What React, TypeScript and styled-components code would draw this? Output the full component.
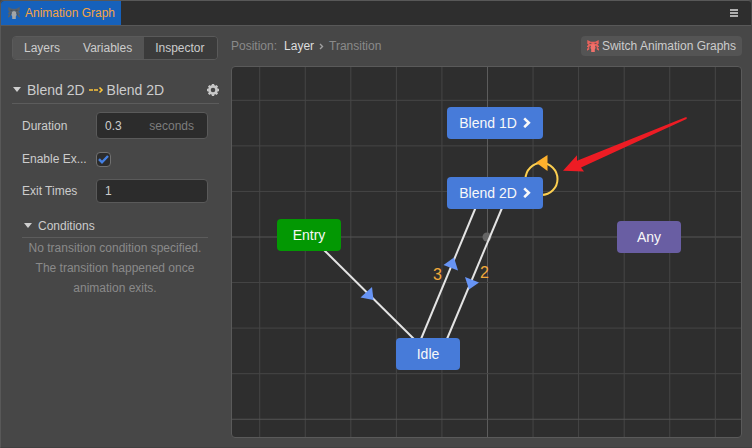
import React from "react";
import styled, { createGlobalStyle } from "styled-components";

const Global = createGlobalStyle`
  * { box-sizing: border-box; }
  html, body, #root { height: 100%; margin: 0; }
  body {
    background: #474747;
    color: #cccccc;
    font: 12px/16px "Liberation Sans", Arial, sans-serif;
  }
  button, input { font: inherit; color: inherit; }
`;

const Panel = styled.div`
  min-height: 100%;
  display: flex;
  flex-direction: column;
  background: #474747;
  border: 1px solid #585858;
  border-right-color: #474747;
  border-bottom-color: #404040;
  border-radius: 4px 4px 0 0;
  overflow: hidden;
`;

const TitleBar = styled.header`
  display: flex;
  align-items: stretch;
  justify-content: space-between;
  height: 25px;
  background: #2e2e2e;
  border-bottom: 1px solid #585858;
`;

const PanelTab = styled.button`
  display: flex;
  align-items: center;
  gap: 5px;
  padding: 0 6px 0 7px;
  border: 0;
  background: #1661bb;
  color: #f5a344;
`;

const MenuButton = styled.button`
  display: flex;
  align-items: center;
  padding: 0 13px;
  border: 0;
  background: none;
  color: #b0b0b0;
`;

const Content = styled.div`
  flex: 1;
  display: flex;
`;

const Sidebar = styled.aside`
  flex: none;
  width: 230px;
  padding: 10px 12px 10px 11px;
`;

const Tabs = styled.div`
  display: flex;
  width: max-content;
  height: 24px;
  border: 1px solid #5a5a5a;
  border-radius: 4px;
  overflow: hidden;
`;

const TabButton = styled.button<{ $active?: boolean }>`
  border: 0;
  padding: 0 12px 0 11px;
  background: ${(p) => (p.$active ? "#3b3b3b" : "#545454")};
`;

const SectionHeader = styled.div`
  display: flex;
  align-items: center;
  gap: 6px;
  height: 28px;
  margin-top: 16px;
  padding-left: 1px;
  border-bottom: 1px solid #5c5c5c;
  font-size: 14px;
`;

const SectionTitle = styled.h2`
  flex: 1;
  display: flex;
  align-items: center;
  gap: 3px;
  margin: 0;
  font: inherit;
`;

const IconButton = styled.button`
  display: flex;
  padding: 0;
  border: 0;
  background: none;
  color: #c8c8c8;
`;

const Fields = styled.div`
  padding: 8px 11px 0 10px;
`;

const Field = styled.div<{ $gap: number }>`
  display: flex;
  align-items: center;
  margin-bottom: ${(p) => p.$gap}px;
`;

const Label = styled.label`
  width: 74px;
  padding-right: 4px;
  overflow: hidden;
  text-overflow: ellipsis;
  white-space: nowrap;
`;

const InputBox = styled.div<{ $tall?: boolean }>`
  flex: 1;
  min-width: 0;
  display: flex;
  align-items: center;
  height: ${(p) => (p.$tall ? 27 : 24)}px;
  padding: 0 13px 0 8px;
  background: #2c2c2c;
  border: 1px solid #5a5a5a;
  border-radius: 4px;
`;

const TextInput = styled.input`
  flex: 1;
  min-width: 0;
  width: 20px;
  padding: 0;
  border: 0;
  outline: 0;
  background: none;
`;

const Unit = styled.span`
  color: #7d7d7d;
`;

const CheckWrap = styled.span`
  display: grid;
  > * { grid-area: 1 / 1; }
  > svg { pointer-events: none; }
`;

const Checkbox = styled.input`
  appearance: none;
  width: 15px;
  height: 15px;
  margin: 0;
  background: #2c2c2c;
  border: 1px solid #707070;
  border-radius: 4px;
  & + svg { visibility: hidden; }
  &:checked + svg { visibility: visible; }
`;

const SubHeader = styled.div`
  display: flex;
  align-items: center;
  gap: 6px;
  height: 26px;
  padding: 2px 0 0 2px;
  border-bottom: 1px solid #5c5c5c;
`;

const SubTitle = styled.h3`
  margin: 0;
  font: inherit;
`;

const Hint = styled.p`
  margin: 0;
  line-height: 20px;
  text-align: center;
  color: #8a8a8a;
`;

const Main = styled.main`
  flex: 1;
  min-width: 0;
  display: flex;
  flex-direction: column;
  gap: 10px;
  padding: 10px 9px 9px 0;
`;

const Toolbar = styled.div`
  display: flex;
  align-items: center;
  justify-content: space-between;
  height: 20px;
`;

const Breadcrumb = styled.nav`
  display: flex;
  align-items: center;
  gap: 4px;
  color: #8a8a8a;
`;

const Crumb = styled.a`
  margin-left: 3px;
  color: #dedede;
  text-decoration: none;
`;

const SwitchButton = styled.button`
  display: flex;
  align-items: center;
  gap: 3px;
  height: 20px;
  padding: 0 6px;
  border: 0;
  border-radius: 4px;
  background: #545454;
`;

const Canvas = styled.section`
  position: relative;
  flex: 1;
  min-height: 320px;
  background: #2e2e2e;
  border: 1px solid #5a5a5a;
  border-radius: 4px;
  overflow: hidden;
`;

const Drawing = styled.svg`
  position: absolute;
  inset: 0;
  width: 100%;
  height: 100%;
  pointer-events: none;
`;

const Node = styled.button<{ $x: number; $y: number; $color: string; $wide?: boolean }>`
  position: absolute;
  left: ${(p) => p.$x}px;
  top: ${(p) => p.$y}px;
  display: flex;
  align-items: center;
  justify-content: center;
  gap: 6px;
  width: ${(p) => (p.$wide ? 96 : 64)}px;
  height: 32px;
  padding: 0 0 1px;
  border: 0;
  border-radius: 4px;
  background: ${(p) => p.$color};
  color: #f8f8f8;
  font-size: 14px;
`;

const Priority = styled.text`
  fill: #f2a93b;
  font-size: 16px;
`;

const GRID = 45.56;
const ORIGIN = { x: 255.5, y: 170 };

const GraphIcon = ({ main, body }: { main: string; body: string }) => (
  <svg width="12" height="12" viewBox="0 0 12 12" aria-hidden="true">
    <path
      d="M0.3 0L3.8 1.7H8.2L11.7 0V3.8L10.4 4.8L12 6V7L10.6 7.2L12 9V10.8L9.8 9.6L8.8 6H3.2L2.2 9.6L0 10.8V9L1.4 7.2L0 7V6L1.6 4.8L0.3 3.8Z"
      fill={main}
    />
    <path d="M4.2 4.8L6 4L7.8 4.8L8.8 7.5L7.8 9.4V12H4.2V9.4L3.2 7.5Z" fill={body} />
    <path d="M2.4 3.4H4.4M7.6 3.4H9.6M3.2 5.8L2.6 8.4M8.8 5.8L9.4 8.4" stroke="#4b4b4b" strokeWidth="0.8" fill="none" />
  </svg>
);

const Caret = () => (
  <svg width="8" height="5" viewBox="0 0 8 5" aria-hidden="true">
    <path d="M0 0H8L4 5Z" fill="#cfcfcf" />
  </svg>
);

const Chevron = () => (
  <svg width="8" height="11" viewBox="0 0 8 11" aria-hidden="true">
    <path d="M1.2 1.4L5.8 5.8L1.2 10.2" stroke="#f8f8f8" strokeWidth="2.6" fill="none" />
  </svg>
);

const Gear = () => (
  <svg width="12" height="12" viewBox="0 0 12 12" aria-hidden="true">
    <circle cx="6" cy="6" r="3.6" fill="none" stroke="currentColor" strokeWidth="2.6" />
    {[0, 45, 90, 135].map((a) => (
      <path key={a} d="M4.8 0H7.2V1.8H4.8ZM4.8 10.2H7.2V12H4.8Z" fill="currentColor" transform={`rotate(${a} 6 6)`} />
    ))}
  </svg>
);

const steps = Array.from({ length: 81 }, (_, i) => i - 40);

const Grid = () => (
  <Drawing aria-hidden="true">
    {steps.map((i) => {
      const x = ORIGIN.x + i * GRID;
      const y = ORIGIN.y + i * GRID;
      return (
        <g key={i} stroke={i % 4 === 0 ? "#545454" : "#464646"}>
          <line x1={x} x2={x} y1="0" y2="100%" stroke={i === 0 ? "#5c5c5c" : "#464646"} />
          <line y1={y} y2={y} x1="0" x2="100%" />
        </g>
      );
    })}
    <circle cx="255" cy="170" r="4.5" fill="#656565" />
  </Drawing>
);

const Links = () => (
  <Drawing aria-hidden="true">
    <g stroke="#e4e4e4" strokeWidth="2">
      <line x1="92" y1="183" x2="182" y2="272" />
      <line x1="243.5" y1="141" x2="189" y2="272" />
      <line x1="270" y1="141" x2="215" y2="272" />
    </g>
    <g fill="#6794f5">
      <path d="M140 220L128.5 230.5L141.5 233Z" />
      <path d="M222 190.5L211.5 198L226 203.5Z" />
      <path d="M233 210L247 215.5L237 222.5Z" />
    </g>
    <circle cx="309.5" cy="112" r="16" fill="none" stroke="#fccf50" strokeWidth="2" />
    <path d="M304 95.5L315.5 88V104Z" fill="#fdb02c" />
    <Priority x="201" y="213">3</Priority>
    <Priority x="248" y="211">2</Priority>
  </Drawing>
);

const Pointer = () => (
  <Drawing aria-hidden="true">
    <path d="M331 103.700L345 88.200V93.700L453.500 50.200L455 50.500L454.500 52L349 100.500L352 104.500Z" fill="#ed1c24" />
  </Drawing>
);

export default function App() {
  return (
    <>
      <Global />
      <Panel>
        <TitleBar>
          <PanelTab>
            <GraphIcon main="#56616d" body="#a3a6a8" />
            <span>Animation Graph</span>
          </PanelTab>
          <MenuButton aria-label="Panel menu">
            <svg width="8" height="8" viewBox="0 0 8 8">
              <path d="M0 1H8M0 4H8M0 7H8" stroke="currentColor" strokeWidth="2" />
            </svg>
          </MenuButton>
        </TitleBar>
        <Content>
          <Sidebar>
            <Tabs role="tablist">
              <TabButton role="tab">Layers</TabButton>
              <TabButton role="tab">Variables</TabButton>
              <TabButton role="tab" aria-selected $active>Inspector</TabButton>
            </Tabs>
            <SectionHeader>
              <Caret />
              <SectionTitle>
                Blend 2D
                <svg width="16" height="9" viewBox="0 0 16 9" role="img" aria-label="to">
                  <path d="M1 5H5M6 5H10" stroke="#fbc53c" strokeWidth="1.4" />
                  <path d="M11.500 2.500L14 5L11.500 7.500" stroke="#fbc53c" strokeWidth="1.600" fill="none" />
                </svg>
                Blend 2D
              </SectionTitle>
              <IconButton aria-label="Settings"><Gear /></IconButton>
            </SectionHeader>
            <Fields>
              <Field $gap={12}>
                <Label htmlFor="duration">Duration</Label>
                <InputBox $tall>
                  <TextInput id="duration" defaultValue="0.3" />
                  <Unit>seconds</Unit>
                </InputBox>
              </Field>
              <Field $gap={12}>
                <Label htmlFor="exit-enabled">Enable Ex...</Label>
                <CheckWrap>
                  <Checkbox id="exit-enabled" type="checkbox" defaultChecked />
                  <svg width="15" height="15" viewBox="0 0 15 15">
                    <path d="M3 7.200L6 10.300L12 4" stroke="#4480e4" strokeWidth="2.400" fill="none" />
                  </svg>
                </CheckWrap>
              </Field>
              <Field $gap={9}>
                <Label htmlFor="exit-times">Exit Times</Label>
                <InputBox>
                  <TextInput id="exit-times" defaultValue="1" />
                </InputBox>
              </Field>
              <SubHeader>
                <Caret />
                <SubTitle>Conditions</SubTitle>
              </SubHeader>
              <Hint>No transition condition specified. The transition happened once animation exits.</Hint>
            </Fields>
          </Sidebar>
          <Main>
            <Toolbar>
              <Breadcrumb aria-label="Position">
                Position:
                <Crumb href="#layer">Layer</Crumb>
                <svg width="7" height="8" viewBox="0 0 7 8" aria-hidden="true">
                  <path d="M2 2L4.500 4.500L2 7" stroke="#a0a0a0" strokeWidth="1.400" fill="none" />
                </svg>
                <span>Transition</span>
              </Breadcrumb>
              <SwitchButton>
                <GraphIcon main="#e8625c" body="#f0716b" />
                Switch Animation Graphs
              </SwitchButton>
            </Toolbar>
            <Canvas aria-label="Animation graph">
              <Grid />
              <Links />
              <Node $x={215} $y={40} $color="#477bd9" $wide>Blend 1D<Chevron /></Node>
              <Node $x={215} $y={110} $color="#477bd9" $wide>Blend 2D<Chevron /></Node>
              <Node $x={45} $y={152} $color="#039803">Entry</Node>
              <Node $x={385} $y={154} $color="#695ea3">Any</Node>
              <Node $x={164} $y={271} $color="#477bd9">Idle</Node>
              <Pointer />
            </Canvas>
          </Main>
        </Content>
      </Panel>
    </>
  );
}
